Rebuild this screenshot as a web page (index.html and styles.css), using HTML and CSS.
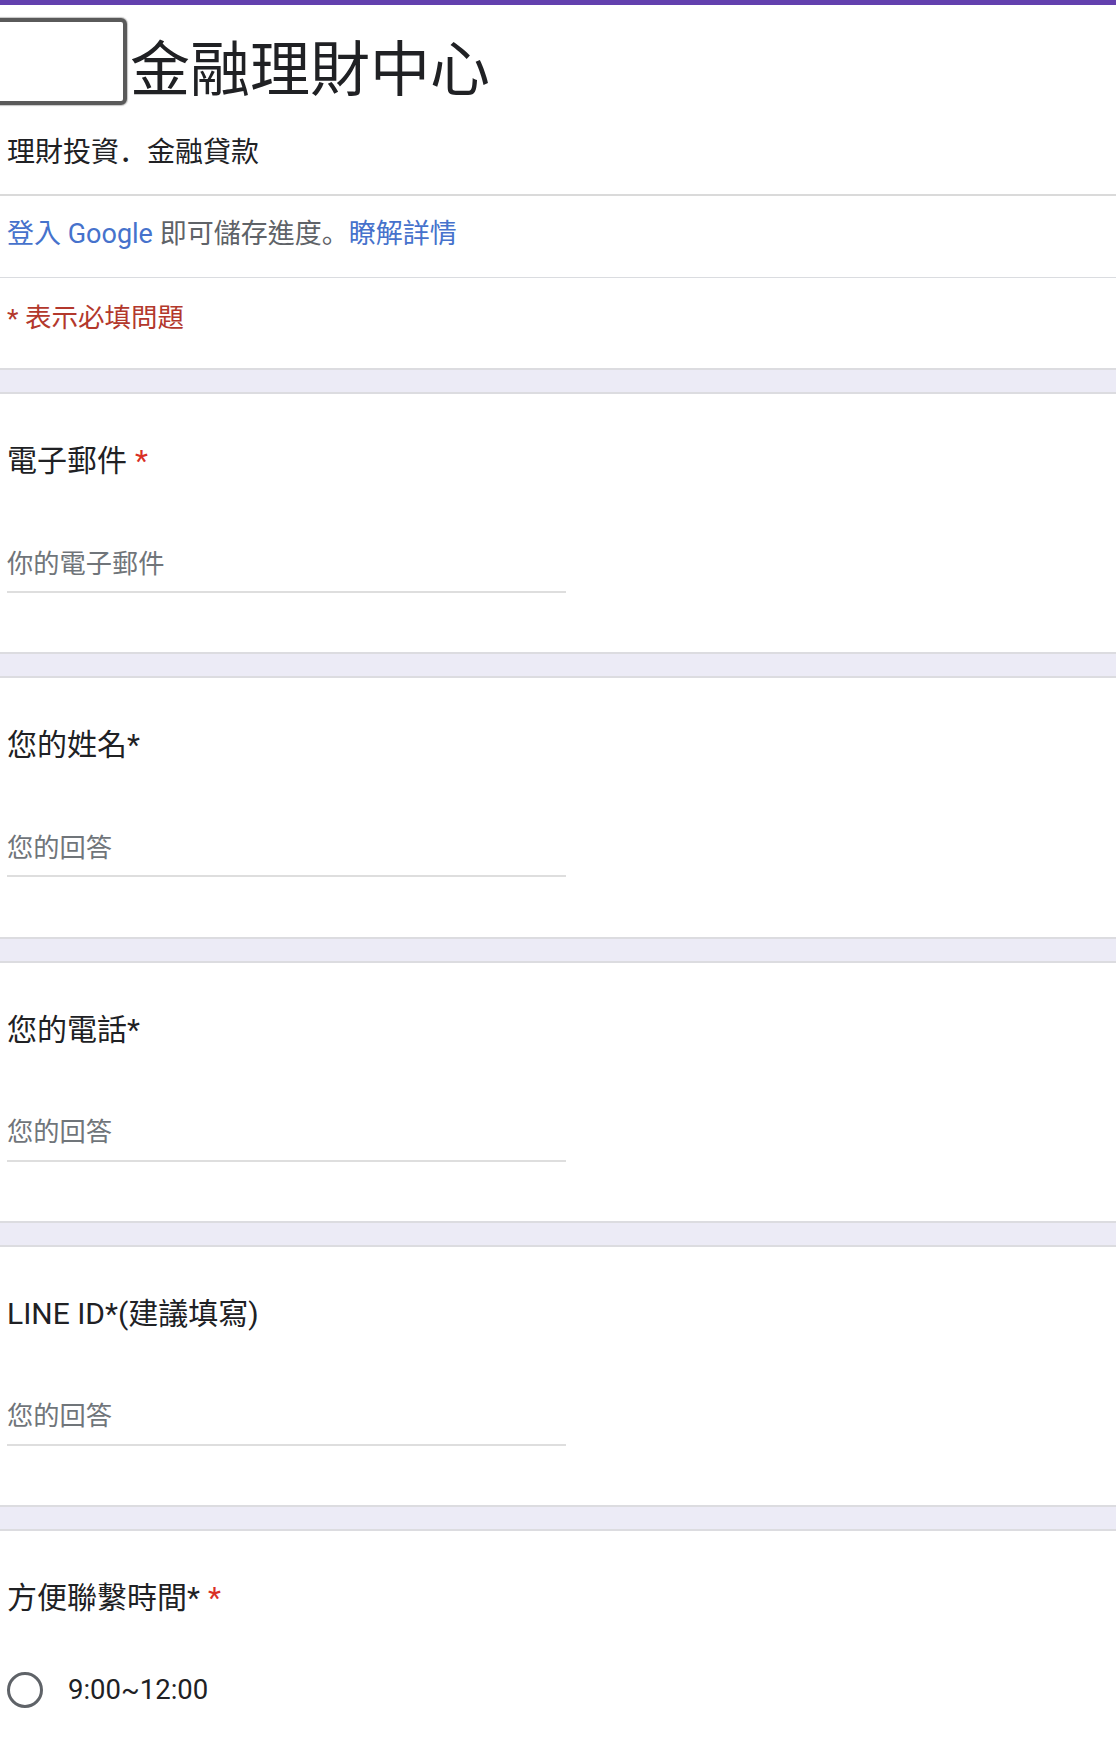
FILE: index.html
```html
<!DOCTYPE html>
<html lang="zh-Hant">
<head>
<meta charset="utf-8">
<title>金融理財中心</title>
<link rel="stylesheet" href="styles.css">
</head>
<body>
<div class="topbar"></div>
<header class="header">
  <div class="brand">
    <div class="logo"></div>
    <h1 class="title">金融理財中心</h1>
  </div>
  <p class="subtitle">理財投資<span class="punct" lang="ja">．</span>金融貸款</p>
</header>
<div class="login"><a class="link">登入 Google</a> 即可儲存進度<span class="punct" lang="ja">。</span><a class="link">瞭解詳情</a></div>
<div class="required-note">* 表示必填問題</div>

<div class="band"></div>
<section class="question">
  <h2 class="q-title">電子郵件<span class="req">*</span></h2>
  <div class="answer">你的電子郵件</div>
</section>

<div class="band"></div>
<section class="question">
  <h2 class="q-title">您的姓名*</h2>
  <div class="answer">您的回答</div>
</section>

<div class="band"></div>
<section class="question">
  <h2 class="q-title">您的電話*</h2>
  <div class="answer">您的回答</div>
</section>

<div class="band"></div>
<section class="question">
  <h2 class="q-title">LINE ID*(建議填寫)</h2>
  <div class="answer">您的回答</div>
</section>

<div class="band"></div>
<section class="question">
  <h2 class="q-title q-title-choice">方便聯繫時間*<span class="req">*</span></h2>
  <div class="choice">
    <span class="radio"></span>
    <span class="choice-label">9:00~12:00</span>
  </div>
</section>
</body>
</html>
```

FILE: styles.css
```css
html, body {
  margin: 0;
  padding: 0;
  background: #ffffff;
}

body {
  font-family: Roboto, "Noto Sans CJK TC", sans-serif;
  color: #202124;
  overflow: hidden;
}

.topbar {
  height: 5px;
  background: #6340ae;
}

.header {
  border-bottom: 2px solid #dadada;
}

.brand {
  display: flex;
  align-items: flex-start;
  gap: 3px;
  margin-top: 13px;
}

.logo {
  box-sizing: border-box;
  width: 135px;
  height: 87px;
  margin-left: -8px;
  border: 4px solid #5a5a5a;
  border-radius: 6px;
  box-shadow: 0 0 1px 1px rgba(90, 90, 90, 0.35);
  background: #ffffff;
  flex: none;
}

.title {
  margin: 23px 0 0;
  font-size: 60px;
  line-height: 60px;
  font-weight: 400;
  color: #202124;
}

.subtitle {
  margin: 30px 0 0;
  padding: 0 0 23px 7px;
  font-size: 28px;
  line-height: 36px;
  color: #202124;
}

.punct {
  font-family: "Noto Sans CJK JP", sans-serif;
  line-height: 0;
}

.login {
  padding: 20px 0 25px 7px;
  font-size: 27px;
  line-height: 36px;
  color: #5f6368;
  border-bottom: 1px solid #dadce0;
}

.link {
  color: #4672cc;
  text-decoration: none;
}

.required-note {
  padding: 22px 0 32px 7px;
  font-size: 26.5px;
  line-height: 36px;
  color: #b3382c;
}

.band {
  height: 22px;
  background: #ecebf6;
  border-top: 2px solid #dcdce0;
  border-bottom: 2px solid #dcdce0;
}

.question {
  padding: 47px 0 59.25px 7px;
}

.q-title {
  margin: 0 0 64.5px;
  font-size: 30px;
  line-height: 40px;
  font-weight: 400;
  color: #202124;
}

.q-title-choice {
  margin-bottom: 54px;
}

.req {
  color: #d93025;
  padding-left: 8px;
}

.answer {
  width: 559px;
  padding-bottom: 9.5px;
  border-bottom: 2px solid #dedede;
  font-size: 26.25px;
  line-height: 36px;
  color: #70757a;
}

.choice {
  display: flex;
  align-items: center;
  gap: 25px;
}

.radio {
  box-sizing: border-box;
  width: 36px;
  height: 36px;
  border: 3.5px solid #5f6368;
  border-radius: 50%;
  flex: none;
}

.choice-label {
  font-size: 27.5px;
  line-height: 36px;
  color: #202124;
}
```
